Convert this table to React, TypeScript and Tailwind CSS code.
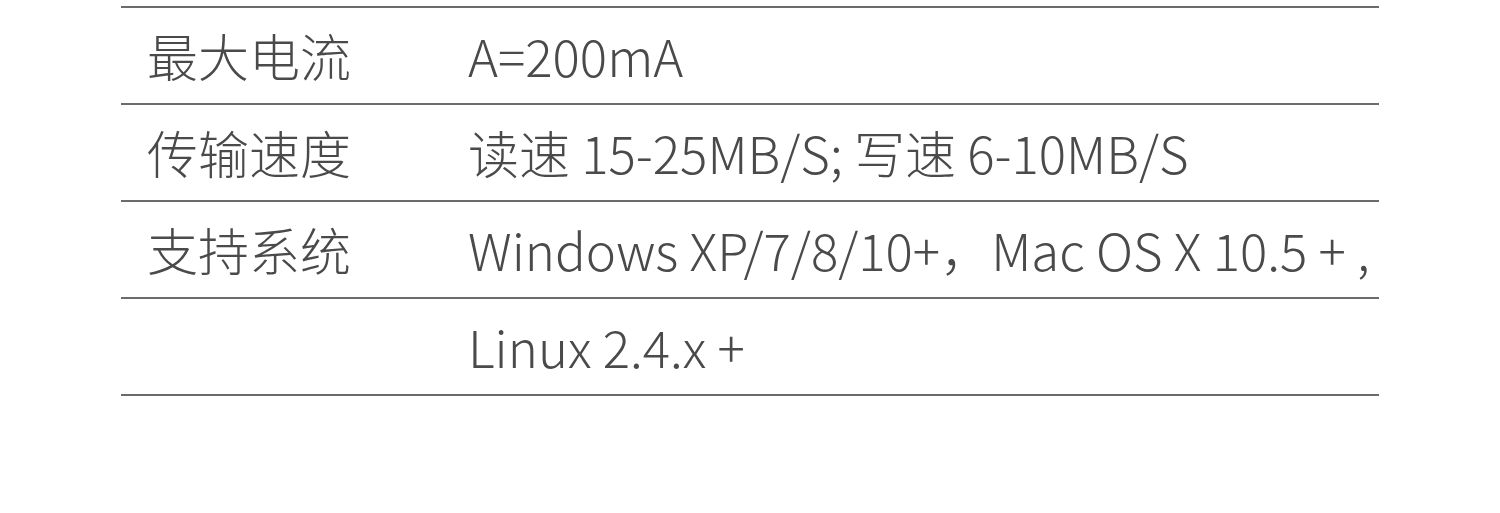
import React from 'react';

const rows: { label: string; value: string }[] = [
  { label: '最大电流', value: 'A=200mA' },
  { label: '传输速度', value: '读速 15-25MB/S; 写速 6-10MB/S' },
  { label: '支持系统', value: 'Windows XP/7/8/10+，Mac OS X 10.5 + ,' },
  { label: '', value: 'Linux 2.4.x +' },
];

export default function App() {
  return (
    <div className="w-[1500px] h-[513px] bg-white pt-[6px] font-['Noto_Sans_CJK_SC','Noto_Sans',sans-serif] text-[#4a4a4a]">
      <div className="mx-[121px] w-[1258px] border-t-2 border-[#6b6b6b]">
        {rows.map((r, i) => (
          <div
            key={i}
            className="flex items-center h-[97px] border-b-2 border-[#6b6b6b]"
          >
            <div className="w-[347px] pl-[26px] text-[51px] font-light leading-none">{r.label}</div>
            <div className="text-[51px] font-light leading-none whitespace-nowrap">{r.value}</div>
          </div>
        ))}
      </div>
    </div>
  );
}
